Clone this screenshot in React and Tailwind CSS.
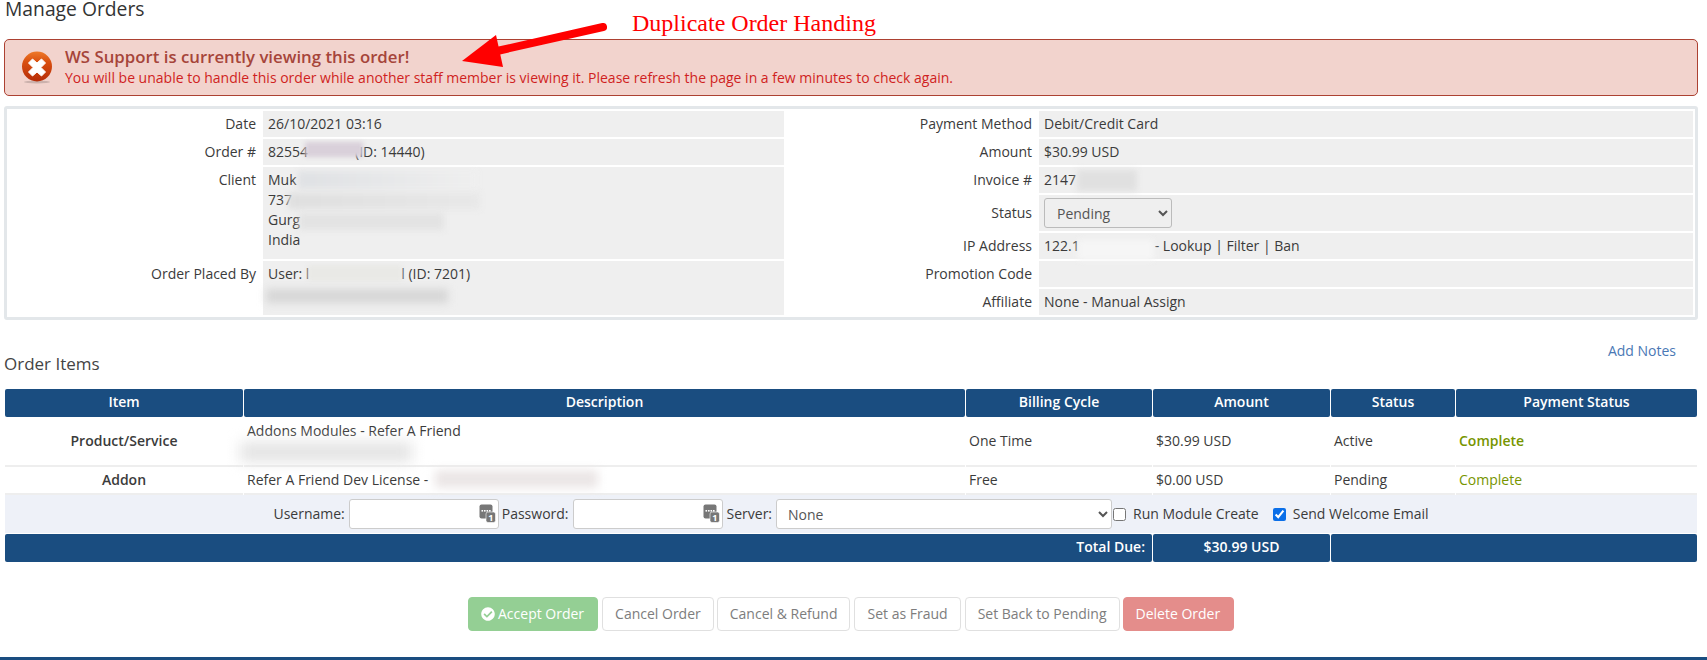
import React from "react";
import { FaCheckCircle } from "react-icons/fa";

function Smudge({ className }) {
  return <span className={"absolute block " + className} />;
}

function InfoRow({ label, h = "h-[26px]", labelW, children }) {
  return (
    <div className={"flex gap-[2px] " + h}>
      <div className={"shrink-0 text-right pr-[5px] pt-[3px] " + labelW}>{label}</div>
      <div className="flex-1 bg-[#efefef] pl-[5px] pt-[3px]">{children}</div>
    </div>
  );
}

function KeyIcon() {
  return (
    <svg className="absolute right-[3px] top-[5px]" width="17" height="19" viewBox="0 0 17 19">
      <rect x="0.5" y="0.5" width="13" height="14" rx="2" fill="#777" />
      <rect x="2.5" y="6" width="1.6" height="1.6" fill="#fff" />
      <rect x="5" y="6" width="1.6" height="1.6" fill="#fff" />
      <rect x="7.5" y="6" width="1.6" height="1.6" fill="#fff" />
      <rect x="10" y="6" width="1.6" height="1.6" fill="#fff" />
      <rect x="7" y="8" width="9.5" height="10.5" rx="2" fill="#777" stroke="#fff" strokeWidth="0.6" />
      <text x="11.8" y="16.5" fontSize="9" fontWeight="700" textAnchor="middle" fill="#fff" fontFamily="Open Sans, sans-serif">1</text>
    </svg>
  );
}

function ErrorIcon() {
  return (
    <svg className="shrink-0" width="32" height="33" viewBox="0 0 32 33">
      <defs>
        <linearGradient id="errg" x1="0" y1="0" x2="0" y2="1">
          <stop offset="0" stopColor="#ee7a2a" />
          <stop offset="0.35" stopColor="#d94f10" />
          <stop offset="1" stopColor="#b52c08" />
        </linearGradient>
      </defs>
      <ellipse cx="16" cy="31" rx="13" ry="1.5" fill="#000" opacity="0.16" />
      <circle cx="16" cy="15.5" r="15" fill="url(#errg)" />
      <path d="M7.5 12 L11.5 8 L16 12 L20.5 8 L24.5 12 L20 16.5 L24.5 21 L20.5 25 L16 21 L11.5 25 L7.5 21 L12 16.5 Z" fill="#fff" stroke="#fff" strokeWidth="1" strokeLinejoin="round" />
    </svg>
  );
}

const cols = "grid grid-cols-[238px_721px_186px_177px_124px_241px] gap-x-px";
const rowCell = "border-b-2 border-[#eeeeee] pb-px";
const headCell = "bg-[#1a4d80] text-white font-semibold text-center h-[28px] leading-[26px] rounded-[2px]";
const btn = "h-[34px] px-[12px] rounded-[4px] border text-[14px] leading-[20px] flex items-center";
const ghost = btn + " border-[#e0e0e0] bg-white text-[#7d7d7d]";
const input = "h-[30px] w-[150px] border border-[#cccccc] rounded-[3px] bg-white";

export default function App() {
  const lw = "w-[252px]";
  const rw = "w-[251px]";
  return (
    <div className="h-[660px] w-full overflow-hidden flex flex-col bg-white text-[14px] leading-[20px] text-[#3b3b3b] font-['Open_Sans',sans-serif]">
      <main className="relative flex-1">
        <h1 className="h-[39px] pl-[5px] text-[19.3px] leading-[18px] text-[#333]">Manage Orders</h1>

        <div className="ml-[4px] mr-[9px] h-[57px] flex items-center gap-[12px] pl-[16px] bg-[#f2d3cd] border border-[#ac4132] rounded-[5px]">
          <ErrorIcon />
          <div className="-mt-[2px]">
            <div className="text-[16.8px] leading-[22px] font-semibold text-[#a6453a]">WS Support is currently viewing this order!</div>
            <div className="text-[14px] leading-[19px] text-[#d01f22]">You will be unable to handle this order while another staff member is viewing it. Please refresh the page in a few minutes to check again.</div>
          </div>
        </div>

        <div className="ml-[4px] mr-[9px] mt-[10px] h-[214px] border-[3px] border-[#e3e7ea] rounded-[3px] p-[2px] flex gap-[2px]">
          <div className="w-[775px] flex flex-col gap-[2px]">
            <InfoRow label="Date" labelW={lw}>26/10/2021 03:16</InfoRow>
            <InfoRow label="Order #" labelW={lw}>82554<span className="inline-block w-[47px]" />(ID: 14440)</InfoRow>
            <InfoRow label="Client" labelW={lw} h="h-[92px]">
              <div>Muk</div>
              <div>737</div>
              <div>Gurg</div>
              <div>India</div>
            </InfoRow>
            <InfoRow label="Order Placed By" labelW={lw} h="h-[54px]">User: l<span className="inline-block w-[92px]" />l (ID: 7201)</InfoRow>
          </div>
          <div className="flex-1 flex flex-col gap-[2px]">
            <InfoRow label="Payment Method" labelW={rw}>Debit/Credit Card</InfoRow>
            <InfoRow label="Amount" labelW={rw}>$30.99 USD</InfoRow>
            <InfoRow label="Invoice #" labelW={rw}>2147</InfoRow>
            <div className="flex gap-[2px] h-[36px]">
              <div className={"shrink-0 text-right pr-[5px] pt-[8px] " + rw}>Status</div>
              <div className="flex-1 bg-[#efefef] pl-[5px] pt-[3px]">
                <select className="block h-[30px] w-[128px] pl-[8px] bg-[#efefef] border border-[#bbbbbb] rounded-[3px] text-[#555]">
                  <option>Pending</option>
                </select>
              </div>
            </div>
            <InfoRow label="IP Address" labelW={rw}>122.1<span className="inline-block w-[75px]" />- Lookup | Filter | Ban</InfoRow>
            <InfoRow label="Promotion Code" labelW={rw} />
            <InfoRow label="Affiliate" labelW={rw}>None - Manual Assign</InfoRow>
          </div>
        </div>

        <div className="h-[69px] ml-[4px] mr-[9px] flex justify-between">
          <div className="pt-[33px] text-[17px] leading-[22px] text-[#444]">Order Items</div>
          <a className="pt-[21px] pr-[22px] text-[#4a78b5]">Add Notes</a>
        </div>

        <div className="ml-[5px] w-[1692px]">
          <div className={cols}>
            <div className={headCell}>Item</div>
            <div className={headCell}>Description</div>
            <div className={headCell}>Billing Cycle</div>
            <div className={headCell}>Amount</div>
            <div className={headCell}>Status</div>
            <div className={headCell}>Payment Status</div>
          </div>
          <div className={cols + " mt-px h-[49px] items-stretch"}>
            <div className={rowCell + " flex items-center justify-center font-semibold"}>Product/Service</div>
            <div className={rowCell + " pl-[3px] pt-[3px]"}>Addons Modules - Refer A Friend</div>
            <div className={rowCell + " flex items-center pl-[3px]"}>One Time</div>
            <div className={rowCell + " flex items-center pl-[3px]"}>$30.99 USD</div>
            <div className={rowCell + " flex items-center pl-[3px]"}>Active</div>
            <div className={rowCell + " flex items-center pl-[3px] font-semibold text-[#779500]"}>Complete</div>
          </div>
          <div className={cols + " h-[28px]"}>
            <div className={rowCell + " flex items-center justify-center font-semibold"}>Addon</div>
            <div className={rowCell + " flex items-center pl-[3px]"}>Refer A Friend Dev License -</div>
            <div className={rowCell + " flex items-center pl-[3px]"}>Free</div>
            <div className={rowCell + " flex items-center pl-[3px]"}>$0.00 USD</div>
            <div className={rowCell + " flex items-center pl-[3px]"}>Pending</div>
            <div className={rowCell + " flex items-center pl-[3px] text-[#779500]"}>Complete</div>
          </div>
          <div className="h-[38px] bg-[#eef1f8] flex items-center justify-center">
            <span className="mr-[4px]">Username:</span>
            <span className="relative block mr-[3px]">
              <span className={input + " block"} />
              <KeyIcon />
            </span>
            <span className="mr-[4px]">Password:</span>
            <span className="relative block mr-[4px]">
              <span className={input + " block"} />
              <KeyIcon />
            </span>
            <span className="mr-[4px]">Server:</span>
            <select className="block h-[30px] w-[336px] pl-[7px] bg-white border border-[#cccccc] rounded-[3px] text-[#555]">
              <option>None</option>
            </select>
            <input type="checkbox" className="w-[13px] h-[13px] ml-px mr-[7px]" />
            <span className="mr-[14px]">Run Module Create</span>
            <input type="checkbox" defaultChecked className="w-[13px] h-[13px] mr-[7px] accent-[#0b6fe8]" />
            <span>Send Welcome Email</span>
          </div>
          <div className={cols + " mt-px h-[28px]"}>
            <div className={"col-span-3 bg-[#1a4d80] text-white font-semibold text-right pr-[7px] leading-[26px] rounded-[2px]"}>Total Due:</div>
            <div className={headCell}>$30.99 USD</div>
            <div className={"col-span-2 bg-[#1a4d80] rounded-[2px]"} />
          </div>
        </div>

        <div className="mt-[35px] ml-[468px] flex gap-[4px]">
          <div className={btn + " pr-[13px] border-[#94cf94] bg-[#94cf94] text-white"}>
            <FaCheckCircle className="mr-[3px] text-[14px]" />Accept Order
          </div>
          <div className={ghost + " mr-[-1px]"}>Cancel Order</div>
          <div className={ghost}>Cancel &amp; Refund</div>
          <div className={ghost}>Set as Fraud</div>
          <div className={ghost + " mr-[-1px]"}>Set Back to Pending</div>
          <div className={btn + " pr-[13px] border-[#e48d8b] bg-[#e48d8b] text-white"}>Delete Order</div>
        </div>

        <Smudge className="blur-[2px] left-[305px] top-[142px] w-[58px] h-[15px] bg-[#d9d0da]" />
        <Smudge className="blur-[3px] left-[298px] top-[171px] w-[179px] h-[18px] bg-linear-to-r from-[#dfe1e4] to-[#efefef]" />
        <Smudge className="blur-[3px] left-[288px] top-[193px] w-[192px] h-[16px] bg-linear-to-r from-[#dfdfdf] to-[#e8e8e8]" />
        <Smudge className="blur-[3px] left-[299px] top-[213px] w-[145px] h-[17px] bg-[#e3e3e3]" />
        <Smudge className="blur-[2px] left-[308px] top-[265px] w-[94px] h-[16px] bg-[#e9e9e6]" />
        <Smudge className="blur-[4px] left-[266px] top-[289px] w-[182px] h-[14px] bg-[#d6d6d6]" />
        <Smudge className="blur-[3px] left-[1077px] top-[170px] w-[60px] h-[21px] bg-[#e0e0e0]" />
        <Smudge className="blur-[3px] left-[1078px] top-[240px] w-[76px] h-[20px] bg-[#f6f6f6]" />
        <Smudge className="blur-[7px] left-[240px] top-[442px] w-[172px] h-[20px] bg-[#e4e4e4]" />
        <Smudge className="blur-[5px] left-[435px] top-[470px] w-[163px] h-[18px] bg-[#ebe6e6]" />

        <svg className="absolute left-[455px] top-[20px]" width="160" height="54" viewBox="0 0 160 54">
          <path d="M148 7 L42 31" stroke="#ff0000" strokeWidth="8" strokeLinecap="round" fill="none" />
          <polygon points="7,41 41,15 48,47" fill="#ff0000" />
        </svg>
        <div className="absolute left-[632px] top-[9px] text-[24px] leading-[28px] text-[#ff0000] font-['Liberation_Serif',serif]">Duplicate Order Handing</div>
      </main>
      <div className="h-[3px] shrink-0 bg-[#1a4d80]" />
    </div>
  );
}
